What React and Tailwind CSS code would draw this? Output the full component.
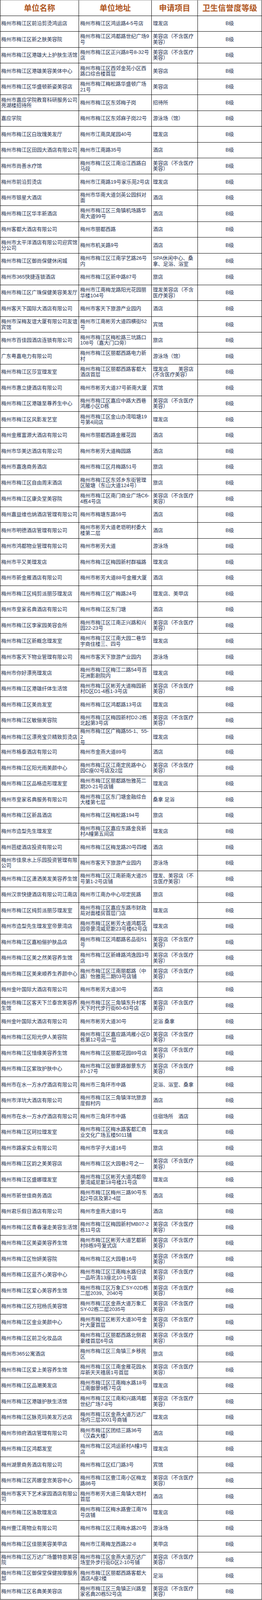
const rows = [
  ["梅州市梅江区前沿剪烫鸿运店", "梅州市梅江区鸿运路4-5号店", "理发店"],
  ["梅州市梅江区新之肤美容院", "梅州市梅江区鸿都路世纪广场9号", "美容店（不含医疗美容）"],
  ["梅州市梅江区港雄大上护肤生活馆", "梅州市梅江区正兴路8号8-32号店", "美容店（不含医疗美容）"],
  ["梅州市梅江区港雄美容美体中心", "梅州市梅江区西郊金苑小区西路口综合楼首层", "美容店"],
  ["梅州市梅江区华盛顿新姿美容店", "梅州市梅江梅松路华盛顿广场21号", "美容店"],
  ["梅州市嘉应学院教育科研服务公司亮湖楼招待所", "梅州市梅江区东郊梅子岗", "招待所"],
  ["嘉应学院", "梅州市梅江区东郊麻子岗22号", "游泳场（馆）"],
  ["梅州市梅江区白玫瑰美发厅", "梅州市江南凤尾园40号", "理发店"],
  ["梅州市梅江区田园大酒店有限公司", "梅州市江南路35号", "酒店"],
  ["梅州市尚善水疗馆", "梅州市梅江区江南沿江西路白马段", "美容店（不含医疗美容）"],
  ["梅州市前沿剪烫店", "梅州市江南路19号家乐苑2号店", "理发店"],
  ["梅州市银星大酒店", "梅州市华南大道剑英公园斜对面", "酒店"],
  ["梅州市梅江区华丰新酒店", "梅州市梅江区三角镇机场路华南大道99号", "酒店"],
  ["梅州客都大酒店有限公司", "梅州市丽都西路", "酒店"],
  ["梅州市太平洋酒店有限公司迎宾馆分公司", "梅州市机关路9号", "酒店"],
  ["梅州市梅江区御尚保健休闲城", "梅州市梅江区江南学艺路26号内", "SPA休闲中心、桑\n拿、足浴、浴室"],
  ["梅州市365快捷连锁酒店", "梅州市梅江区新中路87号", "旅店"],
  ["梅州市梅江区广珠保健美容美发厅", "梅州市江南梅龙路阳光花园丽华楼104号", "理发美容店（不含医疗美容）"],
  ["梅州客天下国际大酒店有限公司", "梅州市客天下旅游产业园内", "酒店"],
  ["梅州市深梅友谊大厦有限公司友谊宾馆", "梅州市江南彬芳大道四横街52号", "宾馆"],
  ["梅州市百佳园酒店连锁有限公司", "梅州市梅江区梅松路三坑路口108号（嘉大门口旁）", "旅店"],
  ["广东粤嘉电力有限公司", "梅州市梅江区丽都西路电力新村", "游泳场（馆）"],
  ["梅州市梅江区莎宣理发室", "梅州市梅江区丽都西路客都大酒店首层", "理发店　　美容店\n(不含医疗美容）"],
  ["梅州市惠立捷酒店有限公司", "梅州市彬芳大道37号新南大厦", "宾馆"],
  ["梅州市梅江区港雄至尊养生中心", "梅州市梅江区嘉应中路大西巷鸿雁小区D栋", "美容店（不含医疗美容）"],
  ["梅州市梅江区风影发艺室", "梅州市梅江区金山办湾咀塘19号第4间店", "理发店"],
  ["梅州金雁富源大酒店有限公司", "梅州市丽都西路金雁花园", "酒店"],
  ["梅州市华美达酒店有限公司", "梅州市彬芳大道梅园路", "酒店"],
  ["梅州市嘉逸商务酒店", "梅州市梅江区月梅路51号", "旅店"],
  ["梅州市梅江区自由周末酒店", "梅州市梅江区东郊乡东街管理区陂塘（东山大道124号）", "旅店"],
  ["梅州市梅江区康灸堂美容院", "梅州市梅江区南门商业广场C6-\n4栋4号店", "美容店（不含医疗美容）"],
  ["梅州嘉益维也纳酒店管理有限公司", "梅州市梅塘东路59号", "酒店"],
  ["梅州市明德酒店管理有限公司", "梅州市彬芳大道老坜明村委大楼第二层", "酒店"],
  ["梅州市鸿都物业管理有限公司", "梅州市彬芳大道", "游泳场"],
  ["梅州市平又美理发店", "梅州市梅江区梅园新村群福路", "理发店"],
  ["梅州市新金雁酒店有限公司", "梅州市彬芳大道88号金雁大厦", "酒店"],
  ["梅州市梅江区纯剪派丽莎理发店", "梅州市梅江区广梅路24号", "理发店、美甲店"],
  ["梅州市皇家名典酒店有限公司", "梅州市梅江区东门塘", "酒店"],
  ["梅州市梅江区李家园美容会所", "梅州市梅江区江南正兴路和兴园22-23号", "美容店（不含医疗美容）"],
  ["梅州市梅江区新概念理发室", "梅州市梅江区江南大园二巷华宇商住楼三、四号", "理发店"],
  ["梅州市客天下物业管理有限公司", "梅州市客天下旅游产业园内", "游泳场"],
  ["梅州市你好漂亮理发店", "梅州市梅江区梅江二路54号百花洲影剧院内", "理发店"],
  ["梅州市梅江区港雄纤体生活馆", "梅州市梅江区彬芳大道梅园新村D区D1-4栋1-3号店", "美容店（不含医疗美容）"],
  ["梅州市梅江区美尚发室", "梅州市梅江区鸿都路13号店", "理发店"],
  ["梅州市梅江区敏俪美容院", "梅州市梅江区梅园新村D2-2栋北起第3号店", "美容店（不含医疗美容）"],
  ["梅州市梅江区漂亮宝贝精致剪烫店", "梅州市梅江区广梅路55-1、55-2\n号", "理发店"],
  ["梅州市格泰酒店有限公司", "梅州市金燕大道89号", "酒店"],
  ["梅州市梅江区阳光雨美颜中心", "梅州市梅江区江南定民路中心园C座02号店及2层", "美容店（不含医疗美容）"],
  ["梅州市梅江区品格造形理发室", "梅州市梅江区丽都路怡雅苑二期20-21号店铺", "理发店"],
  ["梅州市皇家名典服务有限公司", "梅州市梅江区东门塘金融综合大楼第七层", "桑拿 足浴"],
  ["梅州市梅江区新昌酒店", "梅州市梅江区梅松路194号", "旅店"],
  ["梅州市造型先生理发室", "梅州市梅江区嘉应东路金良新村A幢第五间店", "理发店"],
  ["梅州芭缇酒店投资有限公司", "梅州市梅江区梅龙路20号四楼", "酒店"],
  ["梅州市佳泉水上乐园投资管理有限公司", "梅州市客天下旅游产业园内", "游泳场"],
  ["梅州市梅江区潇洒美发美容养生馆", "梅州市梅江区江南新南大道25号第1-2号店铺", "理发、美容店（不含医疗美容）"],
  ["梅州汉崇快捷酒店有限公司江南店", "梅州市江南办中心坝定民路", "旅店"],
  ["梅州市梅江区纯剪派丽莎理发室", "梅州市梅江区嘉应东路市财政局对面楼房首层门店", "理发店"],
  ["梅州市造型先生理发室帝景湾店", "梅州市梅江区彬芳大道鸿都花园帝景湾威尼斯23号楼62号店", "理发店"],
  ["梅州市梅江区嘉柏俪护肤品店", "梅州市梅江区鸿都路名品街51号", "美容店（不含医疗美容）"],
  ["梅州市梅江区美之然美容养生馆", "梅州市梅江区新峰路鸿逸园3号店", "美容店（不含医疗美容）"],
  ["梅州市梅江区美来顺养生养颜中心", "梅州市梅江区江南丽都路（中路）怡雅苑二期03号店铺", "美容店（不含医疗美容）"],
  ["梅州金叶国际大酒店有限公司", "梅州市彬芳大道30号", "酒店"],
  ["梅州市梅江区客天下兰泰宫美容养生馆", "梅州市梅江区三角镇东升村客天下时代步行街60-63号店", "美容店（不含医疗美容）"],
  ["梅州金叶国际大酒店有限公司", "梅州市彬芳大道30号", "足浴 桑拿"],
  ["梅州市梅江区阳光伊人美容院", "梅州市梅江区嘉应路鸿雁小区D栋第12号店一层", "美容店（不含医疗美容）"],
  ["梅州市梅江区惜缘美容养生馆", "梅州市梅江区丽都花园89号店", "美容店（不含医疗美容）"],
  ["梅州市梅江区紫玫护肤中心", "梅州市梅江区御景路御景东方87-17号", "美容店（不含医疗美容）"],
  ["梅州市在水一方水疗酒店有限公司", "梅州市三角环市中路", "足浴、浴室、桑拿"],
  ["梅州市洋坑大酒店有限公司", "梅州市梅江区三角镇洋坑旅游度假村内", "酒店"],
  ["梅州市在水一方水疗酒店有限公司", "梅州市三角环市中路", "住宿场所　酒店"],
  ["梅州市梅江区珂拉理发室", "梅州市梅江区梅水路客都汇商业文化广场五楼5011铺", "理发店"],
  ["梅州市路家实业有限公司", "梅州市学子大道16号", "旅店"],
  ["梅州市梅江区韵之美美容店", "梅州市梅江区大园巷2号之一", "美容店（不含医疗美容）"],
  ["梅州市梅江区盛娜理发室", "梅州市梅江区彬芳大道鸿都帝景湾威尼斯18号楼21号店", "理发店"],
  ["梅州市新世佳商务酒店", "梅州市梅江区梅州三路90号东起2号店及第2-4层", "酒店"],
  ["梅州君乐假日酒店有限公司", "梅州市金燕大道91号", "酒店"],
  ["梅州市梅江区青春漫走美容生活馆", "梅州市梅江区梅园新村MB07-2栋11号店", "美容店（不含医疗美容）"],
  ["梅州市梅江区美姿美容养生馆", "梅州市梅江区彬芳大道艺都新村B栋9号复式店", "美容店（不含医疗美容）"],
  ["梅州市梅江区怡妍美容院", "梅州市梅江区大园巷16号", "美容店（不含医疗美容）"],
  ["梅州市梅江区蓝齐心美容中心", "梅州市梅江区江南梅水路归读一品听涛13座北10-1号店", "美容店（不含医疗美容）"],
  ["梅州市梅江区爱心美容养生馆", "梅州市梅江区万象汇SY-02D栋二层2039、2040号", "美容店（不含医疗美容）"],
  ["梅州市梅江区方冠杨氏美容馆", "梅州市梅江区金燕大道万象汇SY-02栋二层2035号", "美容店（不含医疗美容）"],
  ["梅州市梅江区金业美颜中心", "梅州市梅江区彬芳大道30号金叶大厦首层", "美容店（不含医疗美容）"],
  ["梅州市梅江区前卫化妆品店", "梅州市梅江区丽都西路北侧君豪楼首层6号店", "美容店（不含医疗美容）"],
  ["梅州市365公寓酒店", "梅州市梅江区三角镇三乡移民区", "旅店"],
  ["梅州市梅江区爱上美容养生馆", "梅州市梅江区江南金雁花园水岸新天天禧居1号首层", "美容店（不含医疗美容）"],
  ["梅州市梅江区品潮美发店", "梅州市梅江区江南梅水路18号江南御景9栋7号店", "理发店"],
  ["梅州市梅江区港雄护肤生活馆", "梅州市梅江区江南和兴路鸿都世纪广场7-8号", "美容店（不含医疗美容）"],
  ["梅州市梅江区脉克玛美发万达店", "梅州市梅江区金燕大道万达广场内三层3001号商铺", "理发店"],
  ["梅州市帅府酒店管理有限公司", "梅州市梅江区团结三路36号（汉森大楼）", "酒店"],
  ["梅州市梅江区鸿都发室", "梅州市梅江区鸿运新村A幢3号店", "理发店"],
  ["梅州湖景商务酒店有限公司", "梅州市梅江区红门路3号", "宾馆"],
  ["梅州市梅江区芮娜皇宫美容中心", "梅州市梅江区壹江南小区梅龙路86号", "美容店（不含医疗美容）"],
  ["梅州市客天下艺术家园酒店有限公司", "梅州市彬芳大道三角镇大坜村首层", "酒店"],
  ["梅州市梅江区洛歌理发店", "梅州市梅江区梅水路壹江南76号店铺", "理发店"],
  ["梅州壹江南物业有限公司", "梅州市梅江区江南梅水路20号", "游泳场"],
  ["梅州市梅江区佳丽美容美甲店", "梅州市江南梅龙西路22-8", "美甲店"],
  ["梅州市梅江区万达广场蕾特恩美容院", "梅州市梅江区金燕大道万达广场室外步行街D区2-10号铺", "美容店（不含医疗美容）"],
  ["梅州市梅江区御保堂保健按摩服务部", "梅州市梅江区丽都西路客都大酒店A座2楼", "足浴"],
  ["梅州市梅江区名典美美容店", "梅州市梅江区三角镇正兴路皇家名典20栋52号店", "美容店（不含医疗美容）"],
];

const headers = ["单位名称", "单位地址", "申请项目", "卫生信誉度等级"];

const App = () => {
  return (
    <div className="w-[670px] bg-white font-['Liberation_Sans','Noto_Sans_CJK_SC',sans-serif]">
      <div className="border-l border-black">
        <div className="grid grid-cols-[201px_186px_118px_164px] h-[40.55px] border-t border-t-[#9a9a9a] border-b border-b-black">
          {headers.map((h) => (
            <div
              key={h}
              className="flex items-center justify-center border-r border-black pt-[2px] text-[20px] leading-6 font-bold text-[#b0561f]"
            >
              {h}
            </div>
          ))}
        </div>
        {rows.map((r, i) => (
          <div
            key={i}
            className="grid grid-cols-[201px_186px_118px_164px] h-[40.55px] border-b border-black text-[13px] leading-[14.4px] text-[#1f3150]"
          >
            <div className="flex items-center border-r border-black pl-[2px] pr-[1px]">
              <span>{r[0]}</span>
            </div>
            <div className="flex items-center border-r border-black whitespace-pre-line pl-[3px] pr-[2px]">
              <span>{r[1]}</span>
            </div>
            <div className="flex items-center border-r border-black whitespace-pre-line pl-[3px]">
              <span>{r[2]}</span>
            </div>
            <div className="flex items-center justify-center border-r border-black">B级</div>
          </div>
        ))}
      </div>
    </div>
  );
};

export default App;
